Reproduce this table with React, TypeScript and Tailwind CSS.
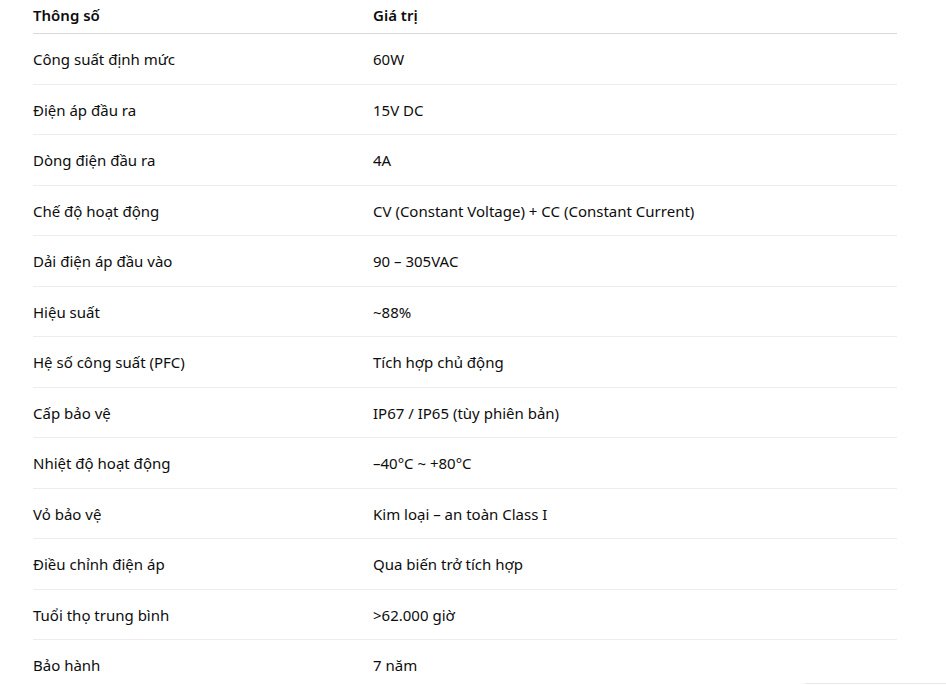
const rows: [string, string][] = [
  ["Công suất định mức", "60W"],
  ["Điện áp đầu ra", "15V DC"],
  ["Dòng điện đầu ra", "4A"],
  ["Chế độ hoạt động", "CV (Constant Voltage) + CC (Constant Current)"],
  ["Dải điện áp đầu vào", "90 – 305VAC"],
  ["Hiệu suất", "~88%"],
  ["Hệ số công suất (PFC)", "Tích hợp chủ động"],
  ["Cấp bảo vệ", "IP67 / IP65 (tùy phiên bản)"],
  ["Nhiệt độ hoạt động", "–40°C ~ +80°C"],
  ["Vỏ bảo vệ", "Kim loại – an toàn Class I"],
  ["Điều chỉnh điện áp", "Qua biến trở tích hợp"],
  ["Tuổi thọ trung bình", ">62.000 giờ"],
  ["Bảo hành", "7 năm"],
];

export default function App() {
  return (
    <div className="relative h-[685px] overflow-hidden bg-white font-['Noto_Sans',sans-serif] text-[15px] text-[#0d0d0d]">
      <div className="ml-[33px] w-[864px]">
        <div className="flex h-[34px] items-center border-b border-[#d9d9d9] pb-[2px] font-semibold">
          <div className="w-[340px]">Thông số</div>
          <div className="flex-1">Giá trị</div>
        </div>
        {rows.map(([k, v], i) => (
          <div
            key={i}
            className="flex h-[50.5px] items-center border-b border-[#ededed] pt-[1px]"
          >
            <div className="w-[340px]">{k}</div>
            <div className="flex-1">{v}</div>
          </div>
        ))}
      </div>
      <div className="absolute bottom-0 left-[805px] h-[2px] w-[141px] border-t border-[#e8e8e8] bg-white" />
    </div>
  );
}
